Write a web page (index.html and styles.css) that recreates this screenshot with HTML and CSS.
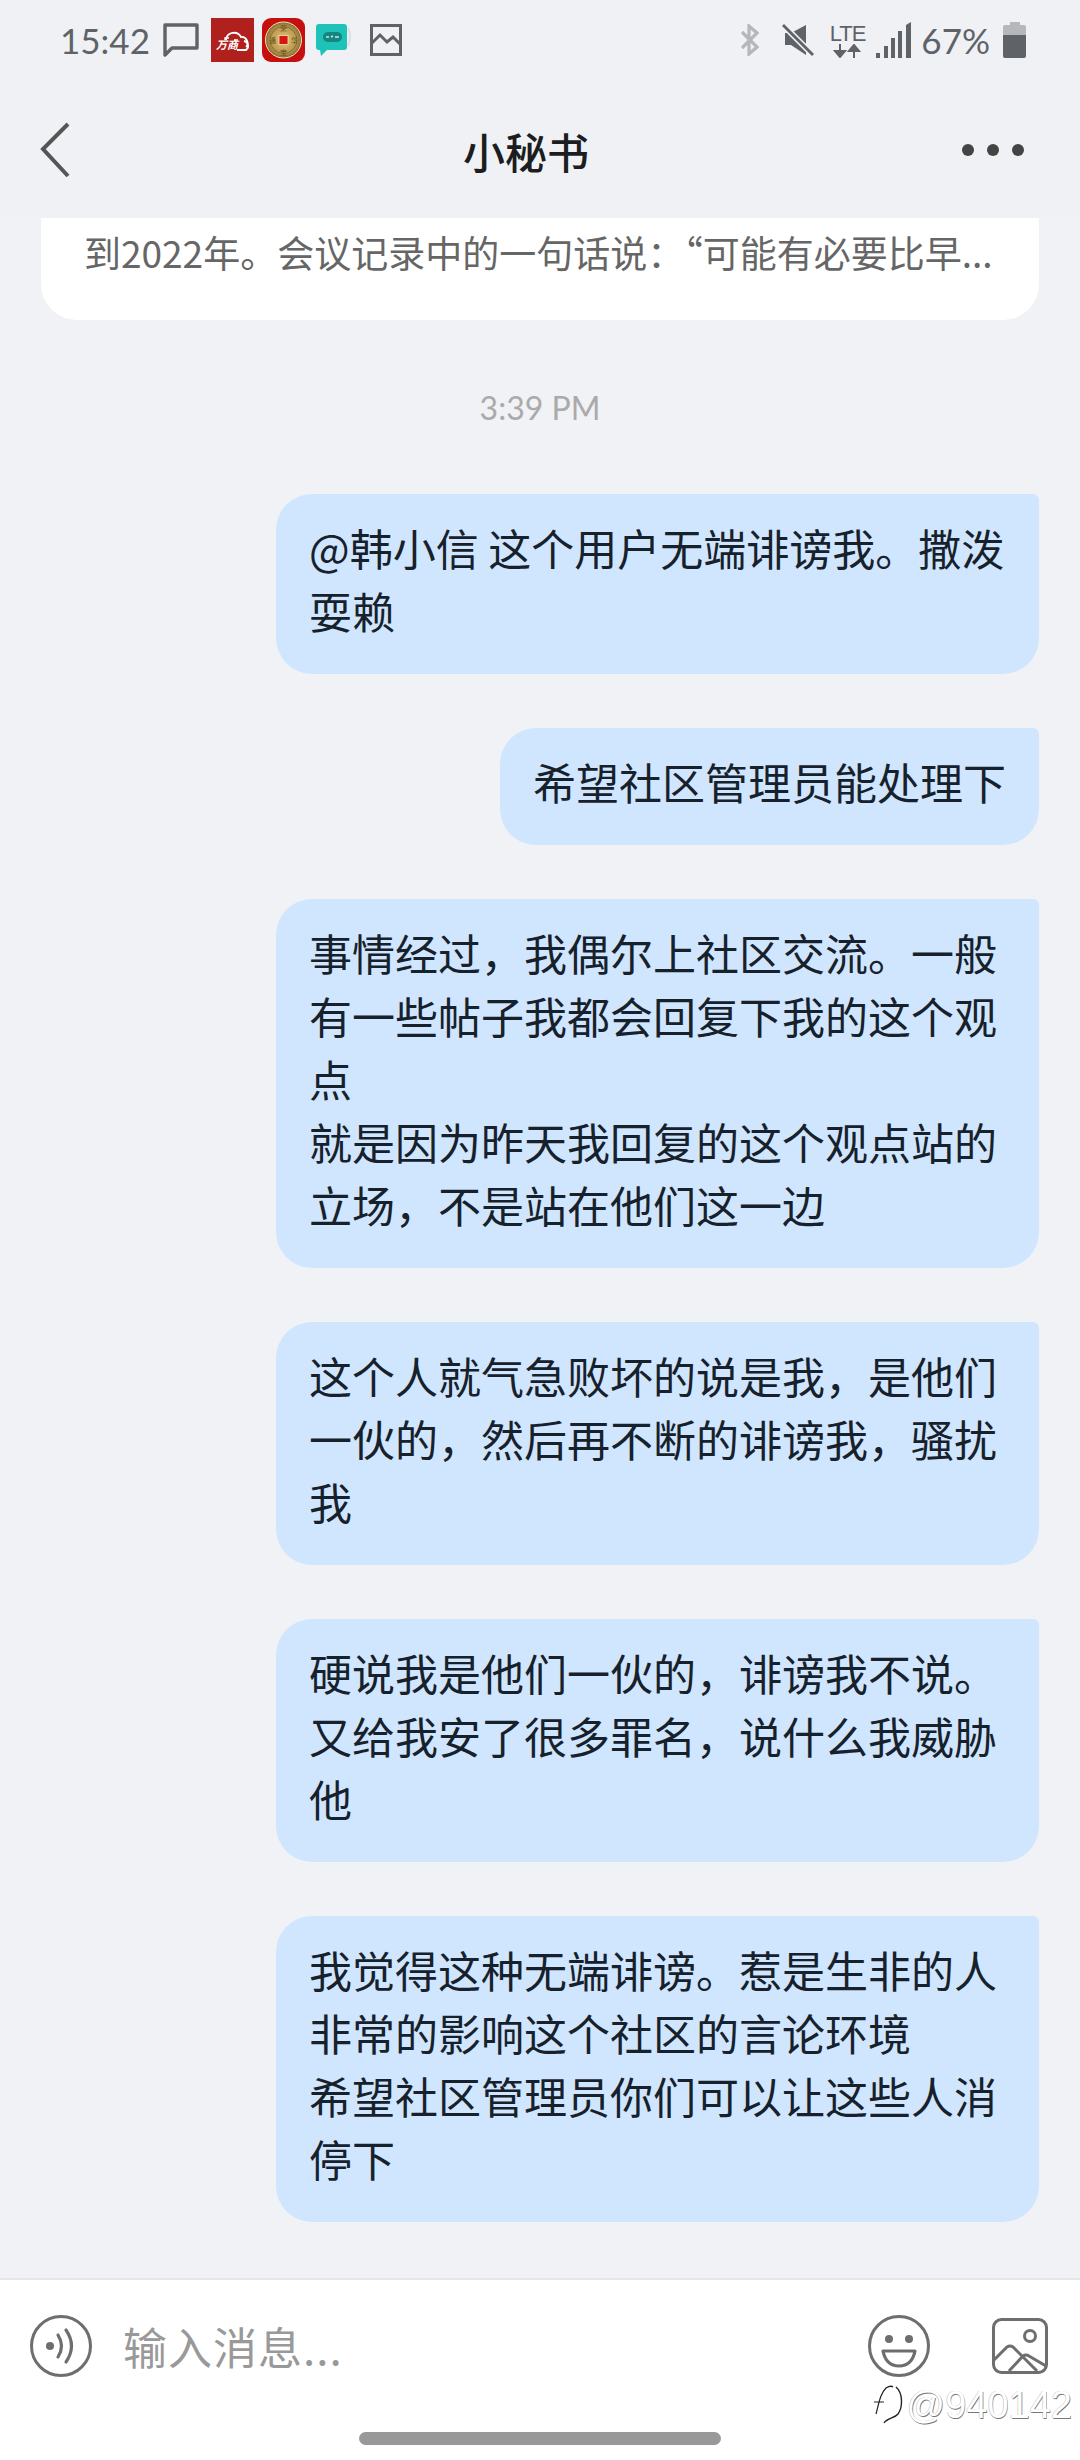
FILE: index.html
```html
<!DOCTYPE html>
<html lang="zh-CN">

<head>
    <meta charset="UTF-8">
    <meta name="viewport" content="width=device-width, initial-scale=1.0">
    <title>小秘书</title>
    <link rel="stylesheet" href="styles.css">
</head>

<body>
    <div class="phone">
        <div class="status-bar">
            <div class="status-left">
                <span class="clock">15:42</span>
                <svg class="ic-chat" width="36" height="34" viewBox="0 0 36 34">
                    <path d="M2 2H34V25H9L2 32Z" fill="none" stroke="#5f6368" stroke-width="3.4" stroke-linejoin="round" />
                </svg>
                <svg class="ic-wanshang" width="43" height="44" viewBox="0 0 43 44">
                    <rect width="43" height="44" fill="#b0201c" />
                    <path d="M15 22a8 8 0 0 1 15-3a6 6 0 0 1 5 10" fill="none" stroke="#fff" stroke-width="1.8" />
                    <path d="M14 22V20h4M23 22h4" fill="none" stroke="#fff" stroke-width="1.4" />
                    <text x="5" y="31" class="ic-wanshang-text">万商</text>
                    <path d="M33 23a5 5 0 0 1 2 9H26" fill="none" stroke="#fff" stroke-width="1.8" />
                </svg>
                <svg class="ic-coin" width="43" height="44" viewBox="0 0 43 44">
                    <defs>
                        <radialGradient id="coinGold" cx="50%" cy="50%" r="50%">
                            <stop offset="0%" stop-color="#e6c878" />
                            <stop offset="75%" stop-color="#b8964e" />
                            <stop offset="100%" stop-color="#7f6a34" />
                        </radialGradient>
                    </defs>
                    <rect width="43" height="44" rx="9" fill="#c80f0f" />
                    <circle cx="21.5" cy="22" r="18" fill="url(#coinGold)" stroke="#efe3b8" stroke-width="1" />
                    <circle cx="21.5" cy="22" r="13.5" fill="none" stroke="#7f6a34" stroke-width="1" />
                    <rect x="17" y="17.5" width="9" height="9" fill="#d81414" stroke="#f3e6b5" stroke-width="0.8" />
                    <text x="21.5" y="13" class="ic-coin-text">荣</text>
                    <text x="21.5" y="37" class="ic-coin-text">宝</text>
                    <text x="10.5" y="25" class="ic-coin-text">通</text>
                    <text x="32.5" y="25" class="ic-coin-text">华</text>
                </svg>
                <svg class="ic-teal" width="37" height="34" viewBox="0 0 37 34">
                    <path d="M4 1H29a3 3 0 0 1 3 3V24a3 3 0 0 1-3 3H12L6 33L5 27H4a3 3 0 0 1-3-3V4a3 3 0 0 1 3-3Z" fill="#1fc2b8" />
                    <path d="M33 5q4 8 0 18" fill="none" stroke="#dcdfe2" stroke-width="2" />
                    <rect x="8" y="9" width="19" height="10" rx="5" fill="#14857f" />
                    <path d="M11 14h3M16 14l2-1M20 14h4" stroke="#bfeeea" stroke-width="1.4" />
                </svg>
                <svg class="ic-image" width="32" height="32" viewBox="0 0 32 32">
                    <rect x="1.5" y="1.5" width="29" height="29" fill="none" stroke="#5f6368" stroke-width="3" />
                    <path d="M2 19L10 11L17 18L23 13L30 20" fill="none" stroke="#5f6368" stroke-width="3" />
                </svg>
            </div>
            <div class="status-right">
                <svg class="ic-bt" width="19" height="32" viewBox="0 0 19 32">
                    <path d="M2 8L17 23L9 30V2L17 9L2 24" fill="none" stroke="#b5b7ba" stroke-width="3.2" />
                </svg>
                <svg class="ic-mute" width="32" height="32" viewBox="0 0 32 32">
                    <path d="M3 9H9L24 1V31L9 21H3Z" fill="#5f6368" />
                    <path d="M0 0L31 31" stroke="#eff1f5" stroke-width="6" />
                    <path d="M1 1L31 31" stroke="#5f6368" stroke-width="2.8" />
                </svg>
                <div class="ic-lte">
                    <span class="lte-text">LTE</span>
                    <svg width="30" height="14" viewBox="0 0 30 14">
                        <path d="M8 0V10M3 7L8 13L13 7Z" fill="#5f6368" stroke="#5f6368" stroke-width="2" />
                        <path d="M22 14V4M17 7L22 1L27 7Z" fill="#5f6368" stroke="#5f6368" stroke-width="2" />
                    </svg>
                </div>
                <svg class="ic-signal" width="35" height="36" viewBox="0 0 35 36">
                    <rect x="0" y="31" width="4" height="5" fill="#5f6368" />
                    <rect x="8" y="24" width="4" height="12" fill="#5f6368" />
                    <rect x="15" y="16" width="4" height="20" fill="#5f6368" />
                    <rect x="22" y="9" width="4" height="27" fill="#5f6368" />
                    <path d="M30 3L35 0V36H30Z" fill="#5f6368" />
                </svg>
                <span class="battery-pct">67%</span>
                <div class="battery">
                    <div class="battery-cap"></div>
                    <div class="battery-empty"></div>
                    <div class="battery-fill"></div>
                </div>
            </div>
        </div>

        <div class="nav-bar">
            <svg width="30" height="56" viewBox="0 0 30 56">
                <path d="M28 2L3 27L28 54" fill="none" stroke="#555" stroke-width="4" />
            </svg>
            <h1 class="nav-title">小秘书</h1>
            <div class="nav-more">
                <span class="nav-dot"></span>
                <span class="nav-dot"></span>
                <span class="nav-dot"></span>
            </div>
        </div>

        <div class="messages">
            <div class="news-card">到2022年。会议记录中的一句话说：“可能有必要比早...</div>
            <div class="msg-time">3:39 PM</div>
            <div class="msg-list">
                <div class="bubble">@韩小信 这个用户无端诽谤我。撒泼耍赖</div>
                <div class="bubble">希望社区管理员能处理下</div>
                <div class="bubble">事情经过，我偶尔上社区交流。一般有一些帖子我都会回复下我的这个观点<br>就是因为昨天我回复的这个观点站的立场，不是站在他们这一边</div>
                <div class="bubble">这个人就气急败坏的说是我，是他们一伙的，然后再不断的诽谤我，骚扰我</div>
                <div class="bubble">硬说我是他们一伙的，诽谤我不说。又给我安了很多罪名，说什么我威胁他</div>
                <div class="bubble">我觉得这种无端诽谤。惹是生非的人非常的影响这个社区的言论环境<br>希望社区管理员你们可以让这些人消停下</div>
            </div>
        </div>

        <div class="input-bar">
            <div class="input-row">
                <svg width="62" height="62" viewBox="0 0 62 62">
                    <circle cx="31" cy="31" r="29.5" fill="none" stroke="#6e6e6e" stroke-width="3" />
                    <circle cx="20" cy="31" r="4" fill="#6e6e6e" />
                    <path d="M28 20q7 11 0 22" fill="none" stroke="#6e6e6e" stroke-width="3.2" stroke-linecap="round" />
                    <path d="M36 15q11 16 0 32" fill="none" stroke="#6e6e6e" stroke-width="3.2" stroke-linecap="round" />
                </svg>
                <div class="input-placeholder">输入消息...</div>
                <svg width="62" height="62" viewBox="0 0 62 62">
                    <circle cx="31" cy="31" r="29.5" fill="none" stroke="#6e6e6e" stroke-width="3" />
                    <circle cx="21" cy="24" r="4" fill="#6e6e6e" />
                    <circle cx="41" cy="24" r="4" fill="#6e6e6e" />
                    <path d="M15 36H47Q44 51 31 51Q18 51 15 36Z" fill="none" stroke="#6e6e6e" stroke-width="3.2" stroke-linejoin="round" />
                </svg>
                <svg class="ic-photo" width="56" height="56" viewBox="0 0 56 56">
                    <rect x="1.5" y="1.5" width="53" height="53" rx="8" fill="none" stroke="#6e6e6e" stroke-width="3" />
                    <circle cx="38" cy="18" r="5.5" fill="none" stroke="#6e6e6e" stroke-width="3" />
                    <path d="M2 42L15 29Q18 27 21 29L45 53" fill="none" stroke="#6e6e6e" stroke-width="3" />
                    <path d="M17 53L31 38Q34 36 37 38L54 48" fill="none" stroke="#6e6e6e" stroke-width="3" />
                </svg>
            </div>
            <div class="home-bar"></div>
            <div class="watermark">
                <svg width="32" height="40" viewBox="0 0 32 40">
                    <path d="M4 29C7 18 8 9 14 3C17 1 20 1 21 2M2 17H12" fill="none" stroke="#222" stroke-width="1.2" />
                    <path d="M24 2C31 8 31 22 26 29C23 33 15 33 12 38" fill="none" stroke="#222" stroke-width="1.4" />
                </svg>
                <span class="watermark-text">@940142</span>
            </div>
        </div>
    </div>
</body>

</html>
```

FILE: styles.css
```css
* {
    box-sizing: border-box;
}

body {
    margin: 0;
    font-family: "Noto Sans CJK SC", "Noto Sans", sans-serif;
    background-color: #f0f2f5;
}

.phone {
    display: flex;
    flex-direction: column;
    width: 1080px;
    height: 2460px;
    overflow: hidden;
}

/* status bar */
.status-bar {
    display: flex;
    justify-content: space-between;
    align-items: center;
    flex: none;
    height: 80px;
    padding: 0 54px 0 60px;
    background-color: #eff1f5;
    color: #5f6368;
}

.status-left,
.status-right {
    display: flex;
    align-items: center;
}

.clock,
.battery-pct {
    font-family: Lato, sans-serif;
    font-size: 35px;
    line-height: 42px;
}

.ic-chat {
    margin-left: 13px;
}

.ic-wanshang {
    margin-left: 12px;
}

.ic-wanshang-text {
    font-family: "Noto Sans CJK SC", sans-serif;
    font-size: 11px;
    font-weight: bold;
    font-style: italic;
    fill: #fff;
}

.ic-coin {
    margin-left: 8px;
}

.ic-coin-text {
    font-family: "Noto Sans CJK SC", sans-serif;
    font-size: 7px;
    fill: #6b5520;
    text-anchor: middle;
}

.ic-teal {
    margin-left: 10px;
}

.ic-image {
    margin-left: 18px;
}

.ic-mute {
    margin-left: 23px;
}

.ic-lte {
    display: flex;
    flex-direction: column;
    align-items: center;
    margin-left: 16px;
}

.lte-text {
    font-family: "Liberation Sans", sans-serif;
    font-size: 22px;
    line-height: 21px;
    letter-spacing: -1px;
}

.ic-signal {
    margin-left: 11px;
}

.battery-pct {
    margin-left: 10px;
}

.battery {
    display: flex;
    flex-direction: column;
    align-items: center;
    width: 23px;
    margin-left: 13px;
}

.battery-cap {
    width: 10px;
    height: 3px;
    background-color: #b5b7ba;
}

.battery-empty {
    width: 100%;
    height: 10px;
    border-radius: 2px 2px 0 0;
    background-color: #b5b7ba;
}

.battery-fill {
    width: 100%;
    height: 23px;
    border-radius: 0 0 2px 2px;
    background-color: #5f6368;
}

/* nav */
.nav-bar {
    display: flex;
    justify-content: space-between;
    align-items: center;
    flex: none;
    height: 138px;
    padding: 2px 56px 0 40px;
    background-color: #eff1f5;
}

.nav-title {
    margin: 0 0 0 20px;
    font-size: 42px;
    font-weight: 500;
    color: #1b1d20;
}

.nav-more {
    display: flex;
    gap: 13px;
}

.nav-dot {
    width: 12px;
    height: 12px;
    border-radius: 50%;
    background-color: #444;
}

/* messages */
.messages {
    flex: 1;
    padding: 0 41px;
}

.news-card {
    height: 102px;
    padding: 0 43px;
    border-radius: 0 0 36px 36px;
    background-color: #fff;
    color: #666;
    font-size: 37px;
    line-height: 68px;
    white-space: nowrap;
}

.msg-time {
    margin-top: 68px;
    color: #aaa;
    font-family: Lato, sans-serif;
    font-size: 32px;
    line-height: 40px;
    text-align: center;
}

.msg-list {
    display: flex;
    flex-direction: column;
    align-items: flex-end;
    gap: 54px;
    margin-top: 66px;
}

.bubble {
    max-width: 763px;
    padding: 22px 33px 32px 33px;
    border-radius: 36px 6px 36px 36px;
    background-color: #cfe6fe;
    color: #17212b;
    font-size: 43px;
    line-height: 63px;
}

/* input */
.input-bar {
    position: relative;
    flex: none;
    height: 182px;
    border-top: 2px solid #e6e6e6;
    background-color: #fff;
}

.input-row {
    display: flex;
    align-items: center;
    height: 62px;
    margin-top: 35px;
    padding: 0 32px 0 30px;
}

.input-placeholder {
    flex: 1;
    margin-left: 31px;
    color: #999;
    font-size: 44px;
    line-height: 62px;
    letter-spacing: 1px;
}

.ic-photo {
    margin-left: 62px;
}

.home-bar {
    width: 362px;
    height: 13px;
    margin: 55px auto 0;
    border-radius: 7px;
    background-color: #999;
}

.watermark {
    position: absolute;
    right: 8px;
    top: 105px;
    display: flex;
    align-items: center;
    gap: 3px;
}

.watermark-text {
    font-family: "Liberation Sans", sans-serif;
    font-size: 38px;
    font-weight: 300;
    line-height: 40px;
    color: #fff;
    text-shadow: 0.6px 0.6px 0 #777, -0.5px -0.5px 0 #bbb;
}
```
